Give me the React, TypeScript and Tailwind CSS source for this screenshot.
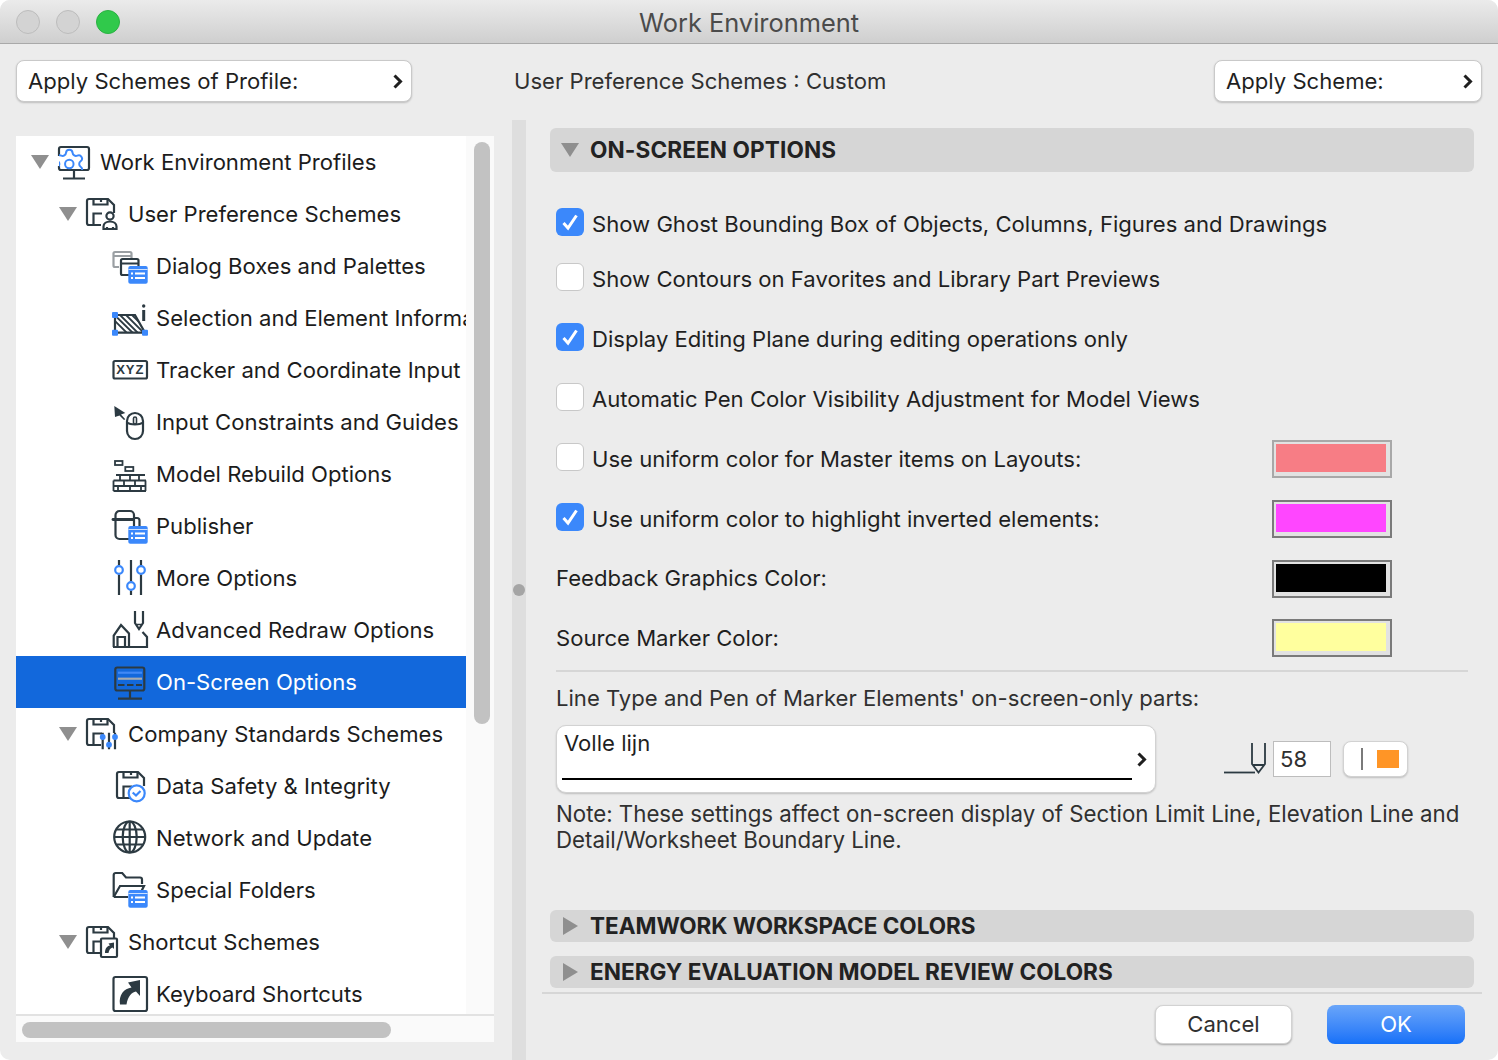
import type { ReactNode } from "react";
import { Settings } from "lucide-react";

const DARK = "#2c3a42";
const BLUE = "#3b88fb";

function Ico({ children }: { children: ReactNode }) {
  return (
    <svg width="40" height="52" viewBox="0 0 40 52" fill="none" stroke={DARK} strokeWidth="2.2" className="shrink-0">
      {children}
    </svg>
  );
}

function ListBadge() {
  return (
    <g>
      <rect x="18.3" y="26" width="19.4" height="17.7" rx="2" fill={BLUE} stroke="none" />
      <path d="M18.5 29.5H37.5" stroke="#ffffff" strokeWidth="1" opacity="0.75" />
      <path d="M21 33.5h2M25 33.5h10M21 38h2M25 38h10" stroke="#ffffff" strokeWidth="2" />
    </g>
  );
}

function Floppy({ x = 0, y = 0 }: { x?: number; y?: number }) {
  return (
    <g transform={`translate(${x} ${y})`}>
      <path d="M19 37H7a2 2 0 0 1-2-2V13a2 2 0 0 1 2-2h19l6 6v8" />
      <path d="M11.5 11v5.5h14V11M19 11v3" />
      <path d="M11.5 36V25.5H20" />
    </g>
  );
}

const icons = {
  workEnv: (
    <Ico>
      <clipPath id="screen">
        <rect x="5" y="12" width="30" height="22" />
      </clipPath>
      <path d="M5 20V13a2 2 0 0 1 2-2h26a2 2 0 0 1 2 2v19a2 2 0 0 1-2 2H7a2 2 0 0 1-2-2v-2" />
      <path d="M20 34v8M9 42.5h22" />
      <g clipPath="url(#screen)">
        <Settings x={-1.7} y={11} width={34} height={34} color={BLUE} strokeWidth={1.4} />
      </g>
    </Ico>
  ),
  user: (
    <Ico>
      <Floppy />
      <circle cx="28" cy="28" r="3.6" />
      <path d="M21.5 41v-2.5c0-3 3-5 6.5-5s6.5 2 6.5 5V41zM25 41v-2M31 41v-2" />
    </Ico>
  ),
  dialog: (
    <Ico>
      <path d="M9 27H5a1.5 1.5 0 0 1-1.5-1.5v-12A1.5 1.5 0 0 1 5 12h15a1.5 1.5 0 0 1 1.5 1.5V18M3.500 16H21" stroke="#9a9fa3" />
      <path d="M19 35h-6.500A1.500 1.500 0 0 1 11 33.500v-13A1.500 1.500 0 0 1 12.500 19h14.500a1.500 1.500 0 0 1 1.500 1.500V26M11 23.500H28" />
      <ListBadge />
    </Ico>
  ),
  selection: (
    <Ico>
      <clipPath id="hatch">
        <path d="M5 23H25L35 40.700H5z" />
      </clipPath>
      <g clipPath="url(#hatch)" strokeWidth="1.900">
        <path d="M3 27L18 42M3 21.500L24 42M8 21L29 42M14 21L35 42M20 21L38 39" />
      </g>
      <path d="M5 23H25L35 40.700H5z" />
      <rect x="2" y="20" width="6" height="6" rx="1" fill={BLUE} stroke="none" />
      <rect x="2" y="37.700" width="6" height="6" rx="1" fill={BLUE} stroke="none" />
      <rect x="32" y="37.700" width="6" height="6" rx="1" fill={BLUE} stroke="none" />
      <circle cx="33.700" cy="14" r="1.700" fill={DARK} stroke="none" />
      <path d="M33.700 18V29" strokeWidth="3" />
    </Ico>
  ),
  tracker: (
    <Ico>
      <rect x="3.500" y="17" width="33.500" height="17.500" rx="1.500" />
      <text x="20.300" y="30" textAnchor="middle" fill={DARK} stroke="none" className="[font-family:'Liberation_Sans',sans-serif] text-[13px] font-bold tracking-[1px]">
        XYZ
      </text>
    </Ico>
  ),
  input: (
    <Ico>
      <path d="M4.300 10L15.300 17L11 18.500L15.300 23.300L14 24L9.500 19.500L5 21z" fill={DARK} stroke="none" />
      <rect x="17" y="17" width="16" height="26" rx="8" />
      <path d="M17 26.500c2 1.500 5 2 8 2s6-.5 8-2" strokeWidth="1.800" />
      <rect x="23.500" y="21" width="3" height="7" rx="1.500" strokeWidth="1.600" />
    </Ico>
  ),
  model: (
    <Ico>
      <rect x="5" y="13" width="7.500" height="4" strokeWidth="1.800" />
      <rect x="15.300" y="19" width="8" height="4" strokeWidth="1.800" />
      <path d="M3.500 32.500H36M3.500 38H36M3.500 43H36M6 27H35M35.500 32.500V43M3.500 32.500V43" strokeWidth="1.800" />
      <path d="M10 27v5.500M20 27v5.500M29 27v5.500M14 32.500V38M25 32.500V38M8 38v5M20 38v5M31 38v5" strokeWidth="1.800" />
    </Ico>
  ),
  publisher: (
    <Ico>
      <path d="M19 39H9.500A4 4 0 0 1 5.500 35V15a4 4 0 0 1 4-4h10.500a4 4 0 0 1 4 4v11" />
      <path d="M24 18h3a2.500 2.500 0 0 1 2.500 2.500V26" />
      <path d="M3 19.500h20" strokeWidth="2.800" strokeLinecap="round" />
      <ListBadge />
    </Ico>
  ),
  more: (
    <Ico>
      <path d="M9 8V13.500M9 22.500V43M21 8V29.500M21 38.500V43M31 8V13.500M31 22.500V43" />
      <circle cx="9" cy="18" r="3.800" stroke={BLUE} />
      <circle cx="21" cy="34" r="3.800" stroke={BLUE} />
      <circle cx="31" cy="18" r="3.800" stroke={BLUE} />
    </Ico>
  ),
  redraw: (
    <Ico>
      <path d="M3.700 43V31.500L11 21L19 29.500V43M3 43H37V33L32.500 28" />
      <path d="M7.500 43V33H15V43" />
      <path d="M25 7V19L29 25L33 19V7" />
      <path d="M27 20.500H31" strokeWidth="1.500" />
    </Ico>
  ),
  onscreen: (
    <Ico>
      <rect x="5.300" y="11.500" width="29" height="23" rx="2" />
      <path d="M20 34.500V42.700M8 42.700H32" />
      <path d="M8 16.700H32" stroke="#4189f5" />
      <path d="M8 22.700H32" stroke="#a4aab0" />
      <path d="M8 29H14.500M17 29H23.500M26 29H32" />
    </Ico>
  ),
  company: (
    <Ico>
      <Floppy />
      <path d="M20.700 24.700V41.300M27 24.700V41.300M33 24.700V41.300" />
      <circle cx="20.700" cy="29" r="2.900" fill={BLUE} stroke="none" />
      <circle cx="27" cy="36.700" r="2.900" fill={BLUE} stroke="none" />
      <circle cx="33" cy="29" r="2.900" fill={BLUE} stroke="none" />
    </Ico>
  ),
  data: (
    <Ico>
      <Floppy x={2} y={1} />
      <circle cx="26.700" cy="33.300" r="8" fill="#ffffff" stroke={BLUE} />
      <path d="M22.700 32.500L26 35.500L30.500 31" stroke={BLUE} />
    </Ico>
  ),
  network: (
    <Ico>
      <circle cx="19.700" cy="25" r="15.500" />
      <ellipse cx="19.700" cy="25" rx="7" ry="15.500" />
      <path d="M19.700 9.500V40.500M4.200 25H35.200M6.500 17.500H33M6.500 32.500H33" />
    </Ico>
  ),
  folders: (
    <Ico>
      <path d="M3.700 33V11a2 2 0 0 1 2-2h6.500L16 13.500H30a2 2 0 0 1 2 2V20" />
      <path d="M3.700 33L10 22H34L31 28M3.700 33H18" />
      <ListBadge />
    </Ico>
  ),
  shortcut: (
    <Ico>
      <Floppy />
      <rect x="19" y="22.500" width="16" height="18.500" rx="1" fill="#ffffff" />
      <path d="M23 37C23 32.500 25 30 28 29.500L26.500 27.500L32 26.500V33L30.500 31.500C28.500 32 27 34 26.500 37z" fill={DARK} stroke="none" />
    </Ico>
  ),
  keyboard: (
    <Ico>
      <rect x="3.500" y="9" width="33.500" height="34" rx="2" />
      <path d="M10 36.500C8.500 27 14 20.500 21.500 19.500L18 14.500L30 12V28L26 23.500C21.500 24.500 18 28 16.500 36.500z" fill={DARK} stroke="none" />
    </Ico>
  ),
};

const TREE = [
  { label: "Work Environment Profiles", depth: 0, open: true, icon: icons.workEnv },
  { label: "User Preference Schemes", depth: 1, open: true, icon: icons.user },
  { label: "Dialog Boxes and Palettes", depth: 2, icon: icons.dialog },
  { label: "Selection and Element Information", depth: 2, icon: icons.selection },
  { label: "Tracker and Coordinate Input", depth: 2, icon: icons.tracker },
  { label: "Input Constraints and Guides", depth: 2, icon: icons.input },
  { label: "Model Rebuild Options", depth: 2, icon: icons.model },
  { label: "Publisher", depth: 2, icon: icons.publisher },
  { label: "More Options", depth: 2, icon: icons.more },
  { label: "Advanced Redraw Options", depth: 2, icon: icons.redraw },
  { label: "On-Screen Options", depth: 2, icon: icons.onscreen, selected: true },
  { label: "Company Standards Schemes", depth: 1, open: true, icon: icons.company },
  { label: "Data Safety & Integrity", depth: 2, icon: icons.data },
  { label: "Network and Update", depth: 2, icon: icons.network },
  { label: "Special Folders", depth: 2, icon: icons.folders },
  { label: "Shortcut Schemes", depth: 1, open: true, icon: icons.shortcut },
  { label: "Keyboard Shortcuts", depth: 2, icon: icons.keyboard },
];

const INDENT = ["pl-[15px]", "pl-[43px]", "pl-[71px]"];

function Chevron({ className }: { className?: string }) {
  return (
    <svg width="11" height="17" viewBox="0 0 11 17" fill="none" stroke="#1f1f1f" strokeWidth="3" className={`shrink-0 ${className ?? ""}`}>
      <path d="M2.500 2.500L8.500 8.500L2.500 14.500" />
    </svg>
  );
}

function TriDown() {
  return (
    <svg width="18" height="14" viewBox="0 0 18 14" className="shrink-0">
      <path d="M0 0H18L9 14z" fill="#8f8f8f" />
    </svg>
  );
}

function TriRight() {
  return (
    <svg width="15" height="18" viewBox="0 0 15 18" className="shrink-0">
      <path d="M0 0L15 9L0 18z" fill="#8f8f8f" />
    </svg>
  );
}

function SchemeButton({ label, className }: { label: string; className: string }) {
  return (
    <div className={`h-[42px] -mt-[1px] flex items-center justify-between pl-[11px] pr-[8px] bg-white rounded-lg border border-[#c9c9c9] shadow-[0_1px_2px_rgba(0,0,0,0.2)] ${className}`}>
      <span className="pt-[1px]">{label}</span>
      <Chevron />
    </div>
  );
}

function TreeRow({ item }: { item: (typeof TREE)[number] }) {
  return (
    <div className={`h-[52px] flex items-center whitespace-nowrap overflow-hidden ${INDENT[item.depth]} ${item.selected ? "bg-[#1268dc] text-white" : "text-[#1c1c1c]"}`}>
      <div className="w-[18px] mr-[5px] shrink-0 flex justify-center">{item.open && <TriDown />}</div>
      {item.icon}
      <span className="ml-[6px] pt-[1px]">{item.label}</span>
    </div>
  );
}

function Check({ on }: { on?: boolean }) {
  return on ? (
    <div className="w-7 h-7 mb-1 rounded-md bg-[#3b88fb] flex items-center justify-center shrink-0">
      <svg width="20" height="20" viewBox="0 0 20 20" fill="none" stroke="#ffffff" strokeWidth="3">
        <path d="M3.500 11L8 16L16.500 3.500" />
      </svg>
    </div>
  ) : (
    <div className="w-7 h-7 mb-1 rounded-md bg-white border border-[#c8c8c8] shrink-0" />
  );
}

function Swatch({ className, faded }: { className: string; faded?: boolean }) {
  return (
    <div className={`ml-auto w-[120px] h-[38px] border-2 bg-[#e2e2e2] pl-[2px] pt-[2px] pr-[4px] pb-[4px] ${faded ? "border-[#a8a8a8]" : "border-[#7a7a7a]"}`}>
      <div className={`w-full h-full ${className}`} />
    </div>
  );
}

function OptionRow({ on, checkbox = true, label, h = "h-[60px]", swatch }: { on?: boolean; checkbox?: boolean; label: string; h?: string; swatch?: ReactNode }) {
  return (
    <div className={`${h} flex items-center`}>
      {checkbox && <Check on={on} />}
      <span className={checkbox ? "ml-2" : ""}>{label}</span>
      {swatch}
    </div>
  );
}

export default function App() {
  return (
    <div className="w-[1498px] h-[1060px] overflow-hidden rounded-[10px] bg-[#ececec] text-[22.1px] leading-none text-[#1f1f1f] [font-family:Inter,'Noto_Sans',sans-serif]">
      {/* title bar */}
      <div className="h-[44px] flex items-center bg-gradient-to-b from-[#ebebeb] to-[#cfcfcf] border-b border-[#a9a9a9]">
        <div className="flex gap-[16px] pl-[16px]">
          <div className="w-6 h-6 rounded-full bg-[#d3d3d3] border border-[#bcbcbc]" />
          <div className="w-6 h-6 rounded-full bg-[#d3d3d3] border border-[#bcbcbc]" />
          <div className="w-6 h-6 rounded-full bg-[#30c94b] border border-[#2bb143]" />
        </div>
        <div className="flex-1 text-center pr-[120px] pt-[2px] text-[25.4px] text-[#4b4b4b]">Work Environment</div>
      </div>

      {/* scheme row */}
      <div className="h-[76px] flex items-start pt-[17px] pl-[16px] pr-[16px]">
        <SchemeButton label="Apply Schemes of Profile:" className="w-[396px]" />
        <div className="ml-[102px] h-[40px] flex items-center text-[#303030]">User Preference Schemes : Custom</div>
        <SchemeButton label="Apply Scheme:" className="ml-auto w-[268px]" />
      </div>

      <div className="flex h-[940px]">
        {/* tree */}
        <div className="w-[512px] pl-[16px] pt-[16px] shrink-0">
          <div className="w-[478px] bg-[#fafafa]">
            <div className="flex h-[878px]">
              <div className="w-[450px] h-[878px] overflow-hidden bg-white">
                {TREE.map((item) => (
                  <TreeRow key={item.label} item={item} />
                ))}
              </div>
              <div className="flex-1 pl-[8px] pr-[4px] pt-[6px]">
                <div className="h-[582px] rounded-lg bg-[#c2c2c2]" />
              </div>
            </div>
            <div className="h-[2px] bg-[#e2e2e2]" />
            <div className="h-[26px] pl-[6px] pt-[6px]">
              <div className="w-[369px] h-4 rounded-lg bg-[#c2c2c2]" />
            </div>
          </div>
        </div>

        {/* splitter */}
        <div className="w-[14px] shrink-0 bg-[#dedede] relative">
          <div className="absolute left-[1px] top-[464px] w-3 h-3 rounded-full bg-[#a5a5a5]" />
        </div>

        {/* options */}
        <div className="w-[972px] shrink-0 pl-[24px] pr-[24px] pt-[8px]">
          <div className="h-[44px] flex items-center rounded-md bg-[#d6d6d6] pl-[11px]">
            <TriDown />
            <span className="ml-[11px] text-[22.6px] tracking-[0.1px] font-bold text-[#222222]">ON-SCREEN OPTIONS</span>
          </div>

          <div className="pl-[6px] pr-[82px] pt-[27px]">
            <OptionRow on h="h-[50px]" label="Show Ghost Bounding Box of Objects, Columns, Figures and Drawings" />
            <OptionRow label="Show Contours on Favorites and Library Part Previews" />
            <OptionRow on label="Display Editing Plane during editing operations only" />
            <OptionRow label="Automatic Pen Color Visibility Adjustment for Model Views" />
            <OptionRow label="Use uniform color for Master items on Layouts:" swatch={<Swatch className="bg-[#f77d85]" faded />} />
            <OptionRow on label="Use uniform color to highlight inverted elements:" swatch={<Swatch className="bg-[#ff46ff]" />} />
            <OptionRow checkbox={false} h="h-[59px]" label="Feedback Graphics Color:" swatch={<Swatch className="bg-black" />} />
            <OptionRow checkbox={false} label="Source Marker Color:" swatch={<Swatch className="bg-[#ffff9e]" />} />
          </div>

          <div className="ml-[6px] mr-[6px] mt-[2px] h-[2px] bg-[#d6d6d6]" />

          <div className="pl-[6px]">
            <div className="h-[53px] flex items-center text-[#303030]">Line Type and Pen of Marker Elements' on-screen-only parts:</div>
            <div className="flex items-center">
              <div className="w-[600px] h-[68px] rounded-[10px] bg-white border border-[#d2d2d2] shadow-[0_1px_2px_rgba(0,0,0,0.2)] pl-[5px] pr-[8px] pt-[6px] flex items-start">
                <div className="w-[570px]">
                  <div className="pl-[2px] h-[22px]">Volle lijn</div>
                  <div className="mt-[24px] h-[2px] bg-black" />
                </div>
                <Chevron className="ml-auto self-center -mt-[6px]" />
              </div>
              <svg width="44" height="32" viewBox="0 0 44 32" fill="none" stroke={DARK} strokeWidth="1.800" className="ml-[68px] mr-[5px] shrink-0">
                <path d="M0 29.500H31" />
                <path d="M28 0V21L34.500 29.500L41 21V0M29 22H40" />
              </svg>
              <div className="w-[58px] h-9 bg-white border border-[#bdbdbd] flex items-center pl-[6px] text-[#303030]">58</div>
              <div className="ml-[12px] w-[65px] h-9 rounded-lg bg-white border border-[#d2d2d2] shadow-[0_1px_2px_rgba(0,0,0,0.2)] flex items-center pl-[17px]">
                <div className="w-[2px] h-[22px] bg-[#7a7a7a]" />
                <div className="ml-[14px] w-[22px] h-[18px] bg-[#ff9526]" />
              </div>
            </div>
            <div className="mt-[8px] h-[52px] text-[22.27px] leading-[26px] whitespace-nowrap text-[#303030]">
              Note: These settings affect on-screen display of Section Limit Line, Elevation Line and
              <br />
              Detail/Worksheet Boundary Line.
            </div>
          </div>

          <div className="mt-[57px] h-[32px] flex items-center rounded-md bg-[#d6d6d6] pl-[13px]">
            <TriRight />
            <span className="ml-[12px] text-[22.5px] font-bold text-[#222222]">TEAMWORK WORKSPACE COLORS</span>
          </div>
          <div className="mt-[14px] h-[32px] flex items-center rounded-md bg-[#d6d6d6] pl-[13px]">
            <TriRight />
            <span className="ml-[12px] text-[22.6px] font-bold text-[#222222]">ENERGY EVALUATION MODEL REVIEW COLORS</span>
          </div>
          <div className="mt-[4px] -mx-2 h-[2px] bg-[#d6d6d6]" />

          <div className="mt-[11px] flex justify-end gap-[35px] pr-[9px]">
            <div className="w-[137px] h-[39px] rounded-lg bg-white border border-[#d2d2d2] shadow-[0_1px_2px_rgba(0,0,0,0.3)] flex items-center justify-center text-[#303030]">Cancel</div>
            <div className="w-[138px] h-[39px] rounded-lg bg-gradient-to-b from-[#69a5f9] to-[#1470f8] flex items-center justify-center text-white">OK</div>
          </div>
        </div>
      </div>
    </div>
  );
}
